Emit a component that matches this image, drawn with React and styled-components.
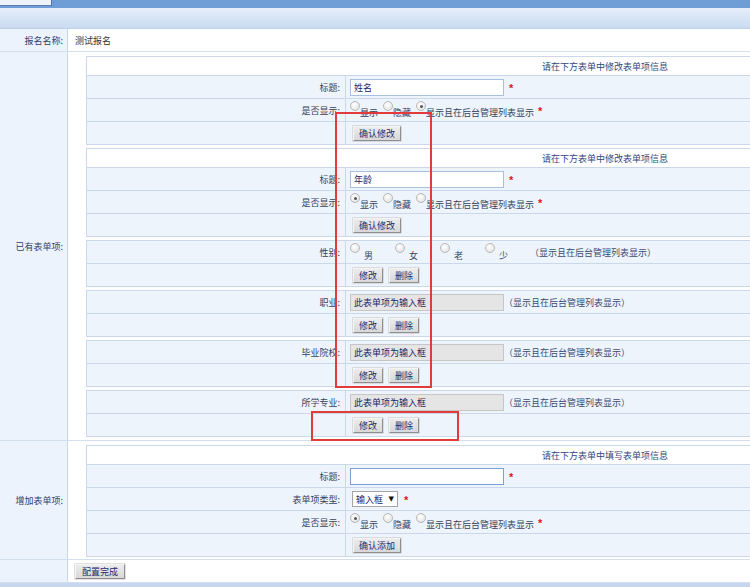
import React from 'react';
import styled, { createGlobalStyle } from 'styled-components';

const GlobalStyle = createGlobalStyle`
  html, body { margin: 0; padding: 0; background: #fff; }
  body {
    font-family: "Noto Sans CJK SC", "Noto Sans", sans-serif;
    font-size: 9px;
    color: #333;
    overflow: hidden;
  }
  * { box-sizing: border-box; }
`;

const Page = styled.div`
  position: relative;
  width: 750px;
  height: 587px;
  overflow: hidden;
  background: #fff;
`;

const TopBar = styled.div`
  height: 8px;
  background: #6f9ed6;
  display: flex;
  align-items: flex-start;
`;

const Tab = styled.div`
  width: 52px;
  height: 6px;
  background: #eef3fa;
  border-right: 1px solid #4f77ab;
  border-bottom: 1px solid #5a80b3;
`;

const HeaderBand = styled.div`
  height: 21px;
  background: linear-gradient(#e6eefa, #c9dbf1);
  border-bottom: 1px solid #bcd0e8;
`;

const MainRow = styled.div`
  display: grid;
  grid-template-columns: 68px 1fr;
  border-bottom: 1px solid #d3dfee;
  ${(p) => (p.$h ? `height: ${p.$h}px;` : '')}
`;

const MainLabel = styled.div`
  background: #edf3fc;
  border-right: 1px solid #c9d7ea;
  display: flex;
  align-items: center;
  justify-content: flex-end;
  padding-right: 4px;
  color: #2f4270;
  white-space: nowrap;
`;

const MainValue = styled.div`
  display: flex;
  align-items: center;
  padding-left: ${(p) => p.$pl ?? 7}px;
  color: #333;
  min-width: 0;
`;

const BlockList = styled.div`
  display: flex;
  flex-direction: column;
  gap: 3px;
  padding: 4px 0 ${(p) => p.$pb ?? 3}px 18px;
  margin-right: -40px;
  width: calc(100% + 40px);
`;

const Block = styled.div`
  border: 1px solid #cbd8e9;
  border-bottom: none;
  background: #eef4fb;
`;

const BlockHeader = styled.div`
  height: 19px;
  background: #fff;
  border-bottom: 1px solid #cbd8e9;
  display: flex;
  align-items: center;
  justify-content: center;
  padding-left: 374px;
  padding-right: 40px;
  color: #34467a;
`;

const FieldRow = styled.div`
  display: grid;
  grid-template-columns: 259px 1fr;
  height: 23px;
  border-bottom: 1px solid #cbd8e9;
  background: #eef4fb;
`;

const FieldLabel = styled.div`
  border-right: 1px solid #cbd8e9;
  display: flex;
  align-items: center;
  justify-content: flex-end;
  padding-right: 5px;
  color: #34425f;
  white-space: nowrap;
`;

const FieldValue = styled.div`
  display: flex;
  align-items: center;
  padding-left: 4px;
  white-space: nowrap;
`;

const TextInput = styled.input`
  width: 154px;
  height: 17px;
  padding: 0 3px;
  margin: 0;
  font-family: inherit;
  font-size: 9px;
  color: #1c2466;
  background: ${(p) => (p.$disabled ? '#e5e5e5' : '#fff')};
  border: 1px solid ${(p) => (p.$disabled ? '#c6c6c6' : p.$focus ? '#7d9fd4' : '#a8c0df')};
  outline: none;
`;

const Star = styled.span`
  color: #e0141e;
  font-size: 11px;
  font-weight: bold;
  line-height: 11px;
  margin-top: 3px;
  margin-left: ${(p) => p.$ml ?? 5}px;
  font-family: "Liberation Sans", sans-serif;
`;

const Note = styled.span`
  color: #3a4a72;
  margin-left: ${(p) => p.$ml ?? 0}px;
`;

const Option = styled.span`
  display: inline-flex;
  align-items: flex-start;
  margin-right: ${(p) => p.$mr ?? 5}px;
  width: ${(p) => (p.$w ? `${p.$w}px` : 'auto')};
  color: #34425f;
  margin-top: 2px;
`;

const RadioDot = styled.span`
  width: 10px;
  height: 10px;
  border-radius: 50%;
  border: 1px solid #b8b8b8;
  background: radial-gradient(circle at 40% 35%, #ffffff 0%, #e8e8e8 70%, #d4d4d4 100%);
  position: relative;
  flex: none;
  margin-top: -2px;
  margin-right: ${(p) => p.$gap ?? 0}px;
  &::after {
    content: '';
    display: ${(p) => (p.$checked ? 'block' : 'none')};
    position: absolute;
    left: 2.5px;
    top: 2.5px;
    width: 3px;
    height: 3px;
    border-radius: 50%;
    background: #555;
  }
`;

const OptionText = styled.span`
  line-height: 13px;
  margin-top: ${(p) => p.$mt ?? 3}px;
`;

const Btn = styled.button`
  height: 15px;
  padding: 0 ${(p) => p.$px ?? 5}px;
  margin: 0 3px 0 ${(p) => p.$ml ?? 3}px;
  font-family: inherit;
  font-size: 9px;
  line-height: 13px;
  color: #1e2b6c;
  background: linear-gradient(#ececec, #d8d8d8);
  border: 1px solid;
  border-color: #f4f4f4 #8e8e8e #8e8e8e #f4f4f4;
  box-shadow: 0 0 0 0.5px #c0c0c0;
  cursor: pointer;
`;

const SelectBox = styled.span`
  display: inline-flex;
  align-items: center;
  justify-content: space-between;
  width: 46px;
  height: 16px;
  padding: 0 3px 0 3px;
  margin-left: 2px;
  border: 1px solid #a5a5a5;
  background: #fff;
  color: #1c2466;
`;

const Arrow = styled.span`
  font-size: 7px;
  color: #111;
  font-family: "DejaVu Sans", sans-serif;
`;

const BottomBar = styled.div`
  height: 4px;
  background: #c6d6ee;
`;

const Annotation = styled.div`
  position: absolute;
  left: ${(p) => p.$x}px;
  top: ${(p) => p.$y}px;
  width: ${(p) => p.$w}px;
  height: ${(p) => p.$h}px;
  border: 2px solid #e23b3b;
  pointer-events: none;
`;

const DisplayRadios = ({ checked }) => (
  <>
    <Option><RadioDot $checked={checked === 0} /><OptionText>显示</OptionText></Option>
    <Option><RadioDot $checked={checked === 1} /><OptionText>隐藏</OptionText></Option>
    <Option $mr={0}><RadioDot $checked={checked === 2} /><OptionText>显示且在后台管理列表显示</OptionText></Option>
    <Star $ml={4}>*</Star>
  </>
);

const EditBlock = ({ title, checked }) => (
  <Block>
    <BlockHeader>请在下方表单中修改表单项信息</BlockHeader>
    <FieldRow>
      <FieldLabel>标题:</FieldLabel>
      <FieldValue>
        <TextInput readOnly value={title} />
        <Star $ml={5}>*</Star>
      </FieldValue>
    </FieldRow>
    <FieldRow>
      <FieldLabel>是否显示:</FieldLabel>
      <FieldValue>
        <DisplayRadios checked={checked} />
      </FieldValue>
    </FieldRow>
    <FieldRow>
      <FieldLabel />
      <FieldValue>
        <Btn>确认修改</Btn>
      </FieldValue>
    </FieldRow>
  </Block>
);

const ActionRow = () => (
  <FieldRow>
    <FieldLabel />
    <FieldValue>
      <Btn>修改</Btn>
      <Btn>删除</Btn>
    </FieldValue>
  </FieldRow>
);

const InputItem = ({ label }) => (
  <Block>
    <FieldRow>
      <FieldLabel>{label}:</FieldLabel>
      <FieldValue>
        <TextInput readOnly $disabled value="此表单项为输入框" />
        <Note $ml={0}>（显示且在后台管理列表显示）</Note>
      </FieldValue>
    </FieldRow>
    <ActionRow />
  </Block>
);

const sexes = ['男', '女', '老', '少'];

export default function App() {
  return (
    <Page>
      <GlobalStyle />
      <TopBar>
        <Tab />
      </TopBar>
      <HeaderBand />

      <MainRow $h={23}>
        <MainLabel>报名名称:</MainLabel>
        <MainValue>测试报名</MainValue>
      </MainRow>

      <MainRow>
        <MainLabel>已有表单项:</MainLabel>
        <BlockList $pb={3}>
          <EditBlock title="姓名" checked={2} />
          <EditBlock title="年龄" checked={0} />
          <Block>
            <FieldRow>
              <FieldLabel>性别:</FieldLabel>
              <FieldValue>
                {sexes.map((s) => (
                  <Option key={s} $w={45} $mr={0}>
                    <RadioDot $gap={4} />
                    <OptionText $mt={4}>{s}</OptionText>
                  </Option>
                ))}
                <Note $ml={0}>（显示且在后台管理列表显示）</Note>
              </FieldValue>
            </FieldRow>
            <ActionRow />
          </Block>
          <InputItem label="职业" />
          <InputItem label="毕业院校" />
          <InputItem label="所学专业" />
        </BlockList>
      </MainRow>

      <MainRow>
        <MainLabel>增加表单项:</MainLabel>
        <BlockList $pb={2}>
          <Block>
            <BlockHeader>请在下方表单中填写表单项信息</BlockHeader>
            <FieldRow>
              <FieldLabel>标题:</FieldLabel>
              <FieldValue>
                <TextInput readOnly $focus value="" />
                <Star $ml={5}>*</Star>
              </FieldValue>
            </FieldRow>
            <FieldRow>
              <FieldLabel>表单项类型:</FieldLabel>
              <FieldValue>
                <SelectBox>
                  输入框
                  <Arrow>▼</Arrow>
                </SelectBox>
                <Star $ml={6}>*</Star>
              </FieldValue>
            </FieldRow>
            <FieldRow>
              <FieldLabel>是否显示:</FieldLabel>
              <FieldValue>
                <DisplayRadios checked={0} />
              </FieldValue>
            </FieldRow>
            <FieldRow>
              <FieldLabel />
              <FieldValue>
                <Btn>确认添加</Btn>
              </FieldValue>
            </FieldRow>
          </Block>
        </BlockList>
      </MainRow>

      <MainRow $h={23}>
        <MainLabel />
        <MainValue $pl={7}>
          <Btn $ml={0} $px={6}>配置完成</Btn>
        </MainValue>
      </MainRow>
      <BottomBar />

      <Annotation $x={335} $y={112} $w={97} $h={276} />
      <Annotation $x={311} $y={411} $w={148} $h={30} />
    </Page>
  );
}
